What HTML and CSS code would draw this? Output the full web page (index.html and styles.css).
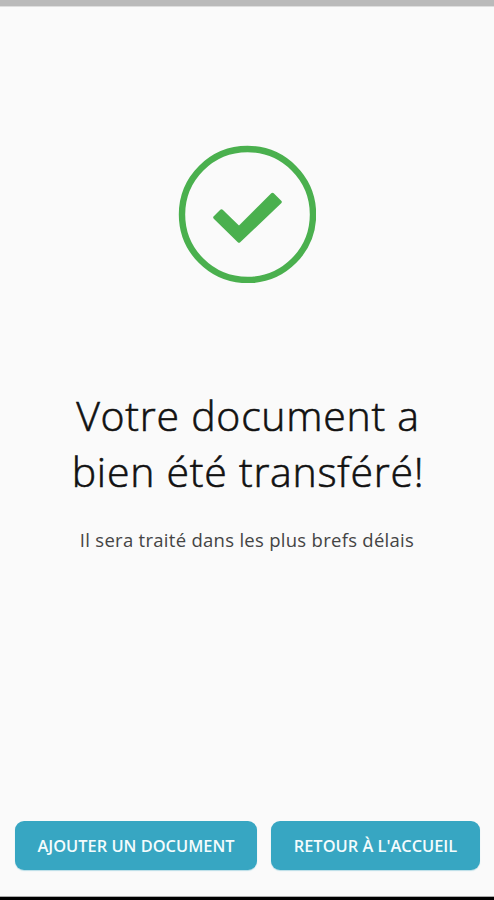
FILE: index.html
```html
<!DOCTYPE html>
<html lang="fr">
<head>
<meta charset="utf-8">
<title>Document transféré</title>
<link rel="stylesheet" href="styles.css">
</head>
<body>
<main class="screen">
  <svg class="success" viewBox="0 0 138 138" aria-hidden="true">
    <circle cx="69.5" cy="69.5" r="65.5" fill="none" stroke="#4ab04e" stroke-width="6.4"/>
    <path d="M43.5 66 L61 83 L94.500 49.5 L102 57 L61 96 L37 72.500 Z" fill="#4ab04e" stroke="#4ab04e" stroke-width="3.500" stroke-linejoin="round"/>
  </svg>
  <h1 class="title">Votre document a<br>bien été transféré!</h1>
  <p class="subtitle">Il sera traité dans les plus brefs délais</p>
  <div class="actions">
    <button class="button button-add">AJOUTER UN DOCUMENT</button>
    <button class="button button-home">RETOUR À L'ACCUEIL</button>
  </div>
</main>
</body>
</html>
```
FILE: styles.css
```css
* { box-sizing: border-box; }
body { margin: 0; }
.screen {
  height: 900px;
  display: flex;
  flex-direction: column;
  align-items: center;
  background: #fafafa;
  border-top: 6px solid #bababa;
  border-bottom: 3px solid #000;
  font-family: "Open Sans", sans-serif;
  color: #111;
  box-shadow: inset 0 1px #dedede, inset 0 -1px #aaa;
}
.success { width: 138px; height: 138px; margin-top: 139px; flex: none; }
.title {
  margin: 104px 0 0;
  padding-left: 2px;
  font-size: 41px;
  line-height: 56px;
  font-weight: 300;
  letter-spacing: 0.75px;
  -webkit-text-stroke: 0.6px #111;
  text-align: center;
  white-space: nowrap;
}
.subtitle {
  margin: 28px 0 0;
  font-size: 18.5px;
  line-height: 26px;
  letter-spacing: 0.28px;
  color: #444;
  white-space: nowrap;
}
.actions { width: 100%; display: flex; gap: 14px; padding: 0 14px 0 15px; margin-top: auto; margin-bottom: 27px; }
.button {
  height: 49px;
  padding: 0;
  border: 0;
  border-radius: 9px;
  background: #37a6c2;
  color: #f4fcfd;
  font: 600 16.4px "Open Sans", sans-serif;
  white-space: nowrap;
  box-shadow: 0 1px 1px #37a6c255;
}
.button-add { width: 242px; }
.button-home { width: 209px; }
```
